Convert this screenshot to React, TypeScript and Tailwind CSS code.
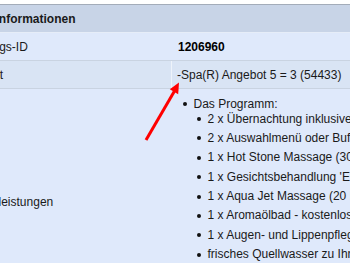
const items = [
  '2 x Übernachtung inklusive Frühstück',
  '2 x Auswahlmenü oder Buffet am Abend',
  '1 x Hot Stone Massage (30 Min.)',
  "1 x Gesichtsbehandlung 'Express'",
  '1 x Aqua Jet Massage (20 Min.)',
  '1 x Aromaölbad - kostenlos',
  '1 x Augen- und Lippenpflege',
  'frisches Quellwasser zu Ihrer Verfügung',
]

function Bullet() {
  return <span className="inline-block w-[4px] h-[4px] rounded-full bg-[#111] shrink-0" />
}

export default function App() {
  return (
    <div className="relative w-[350px] h-[263px] overflow-hidden bg-white font-['Liberation_Sans',Arial,sans-serif] text-[12px] text-[#1a1a1a]">
      <div className="h-[4px] bg-white" />
      <div className="ml-[-45px]">
        {/* header */}
        <div className="h-[28px] border-t border-[#a3acb9] bg-[#c8d4e7] flex items-center font-bold whitespace-nowrap">
          <span className="pl-[3.5px] ml-[-25px]">Buchungs Informationen</span>
        </div>
        <div className="h-px bg-[#e6edf8]" />

        {/* row 1 */}
        <div className="h-[27px] flex bg-[#dfe9fb]">
          <div className="w-[217px] pl-[3.5px] flex items-center">Buchungs-ID</div>
          <div className="flex-1 pl-[6px] flex items-center font-bold text-black">1206960</div>
        </div>
        <div className="h-px bg-[#c9d3e1]" />

        {/* row 2 */}
        <div className="h-[27px] flex bg-[#d9e4f4]">
          <div className="w-[217px] pl-[3.5px] flex items-center border-r border-[#eef3fa]">Angebot</div>
          <div className="flex-1 pl-[5px] flex items-center whitespace-nowrap">-Spa(R) Angebot 5 = 3 (54433)</div>
        </div>
        <div className="h-px bg-[#c9d3e1]" />

        {/* row 3 */}
        <div className="flex bg-[#dfe9fb] h-[200px]">
          <div className="w-[217px] pl-[3.5px] pt-[106px] leading-[15px]">Inklusivleistungen</div>
          <div className="flex-1 pl-[11px] pt-[7.5px] leading-[15px] whitespace-nowrap overflow-hidden">
            <div className="flex items-center gap-[6.5px]">
              <Bullet />
              <span>Das Programm:</span>
            </div>
            <div className="pl-[14px]">
              {items.map((item) => (
                <div key={item} className="flex items-center gap-[6.5px] h-[15px] mb-[4.4px]">
                  <Bullet />
                  <span>{item}</span>
                </div>
              ))}
            </div>
          </div>
        </div>
      </div>

      {/* red arrow */}
      <svg className="absolute left-0 top-0 pointer-events-none" width="350" height="263">
        <line x1="146" y1="140" x2="174.5" y2="91" stroke="#ff0000" strokeWidth="3" />
        <polygon points="179,82.5 178.2,94.2 169.8,89.2" fill="#ff0000" />
      </svg>
    </div>
  )
}
